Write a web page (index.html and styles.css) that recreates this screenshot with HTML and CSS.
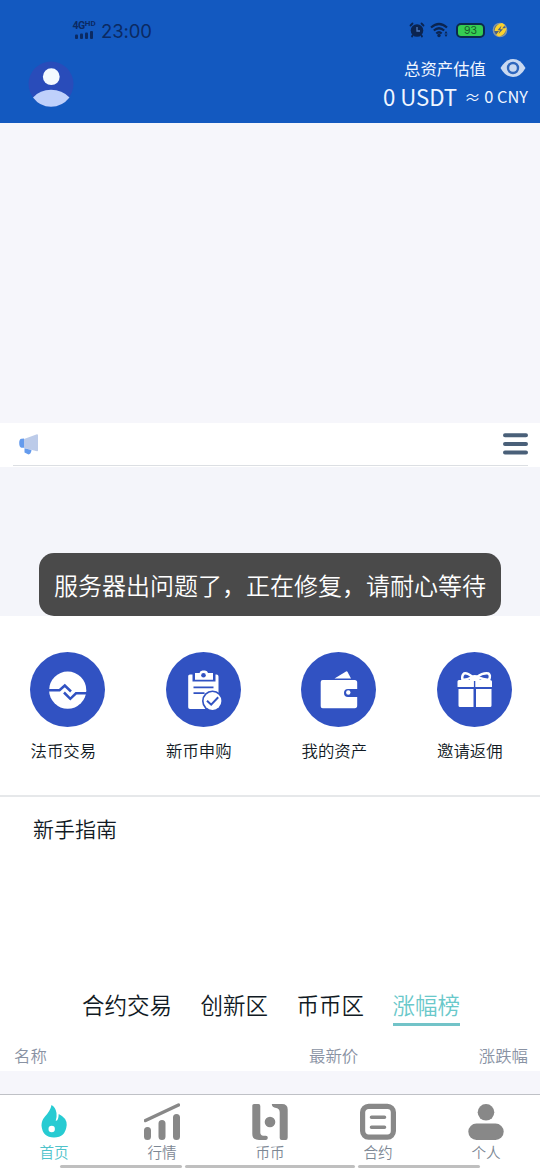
FILE: index.html
```html
<!DOCTYPE html>
<html lang="zh-CN">
<head>
<meta charset="utf-8">
<title>首页</title>
<link rel="stylesheet" href="styles.css">
</head>
<body>
<div class="app">
  <header class="header">
    <div class="status">
      <div class="signal">
        <span class="net">4G<sup>HD</sup></span>
        <svg width="18" height="8" viewBox="0 0 18 8" fill="#0b2a63"><rect x="0" y="3.5" width="3" height="4.5" rx="1"/><rect x="5" y="2.5" width="3" height="5.500" rx="1"/><rect x="10" y="1.500" width="3" height="6.500" rx="1"/><rect x="15" y="0" width="3" height="8" rx="1"/></svg>
      </div>
      <span class="clock">23:00</span>
      <div class="status-right">
        <svg width="16" height="16" viewBox="0 0 16 16"><circle cx="8" cy="8.500" r="6.300" fill="#0b2450"/><path d="M1.500 3.500 3.500 1.500M14.500 3.500 12.500 1.500M3.500 13.500 3 14.500M12.500 13.500 13 14.500" stroke="#0b2450" stroke-width="1.800" stroke-linecap="round"/><path d="M8 5v4h3" fill="none" stroke="#4d78bd" stroke-width="1.300"/></svg>
        <svg class="wifi" width="20" height="16" viewBox="0 0 20 16"><g fill="none" stroke="#0b2450" stroke-width="2.200"><path d="M1 5.500Q9 -1.500 17 5.500"/><path d="M3.800 8.500Q9 4 14.200 8.500"/><path d="M6.300 11.500Q9 9 11.700 11.500"/></g><circle cx="9" cy="13.500" r="1.700" fill="#0b2450"/><path d="M14.500 11.500 16 9l1.500 2.500zM14.500 12.500 16 15l1.500-2.500z" fill="#0b2450"/></svg>
        <span class="battery">93</span>
        <svg class="bolt" width="16" height="16" viewBox="0 0 16 16"><circle cx="8" cy="8" r="6.600" fill="#4d6180" stroke="#8796a1" stroke-width="1.500"/><path d="M2.500 9Q3 2.500 10 1l3 2-3 3.500 4.500-.5Q13.500 13 7 14.500l-3-1.500 3-4z" fill="#fbd22e"/><path d="M9.500 3.500 5.500 8.300H8L6.500 12 11 7.300H8.300Z" fill="#4d6180"/></svg>
      </div>
    </div>
    <div class="account">
      <svg class="avatar" width="46" height="46" viewBox="0 0 46 46"><circle cx="23" cy="23" r="22.500" fill="#294cba"/><circle cx="23.300" cy="15.700" r="8.400" fill="#f3faff"/><path d="M5 36.500Q12 28.800 23 28.800T41.500 36.500Q34 45.800 23 45.800T5 36.500Z" fill="#bfd0fb"/></svg>
      <div class="asset">
        <div class="asset-title">总资产估值
          <svg width="26" height="20" viewBox="0 0 26 20"><path d="M.5 10Q5.500 1 13 1t12.500 9Q20.500 19 13 19T.5 10Z" fill="#c9d9f1"/><circle cx="13" cy="10" r="6.200" fill="#2f67bd"/><circle cx="13" cy="10" r="3.800" fill="#c9d9f1"/></svg>
        </div>
        <div class="asset-value"><b>0 USDT</b><span>≈ 0 CNY</span></div>
      </div>
    </div>
  </header>
  <div class="banner"></div>
  <div class="notice">
    <div class="notice-inner">
      <svg width="20" height="21" viewBox="0 0 20 21"><path d="M5 5 18 .3q1 0 1 1V16.500q0 1-1 .8L5 14Z" fill="#bccbe9"/><path d="M5 4.500v9.200H2.500Q.2 13 .2 9T2.500 4.800Z" fill="#649bed"/><path d="M5.500 14.300 12.500 16Q12 20 9.500 20.500L5.500 18.500Z" fill="#649bed"/></svg>
      <svg width="25" height="22" viewBox="0 0 25 22"><path d="M2 2.300h21M2 11h21M2 19.500h21" stroke="#4a6079" stroke-width="4" stroke-linecap="round"/></svg>
    </div>
  </div>
  <div class="coins"><div class="toast">服务器出问题了，正在修复，请耐心等待</div></div>
  <nav class="menu">
    <a class="menu-item">
      <svg width="75" height="75" viewBox="0 0 75 75"><circle cx="37.500" cy="37.500" r="37.500" fill="#3152c2"/><circle cx="37.700" cy="38.200" r="18.600" fill="#fff"/><path d="M18 38.300H29.500L34.800 33.500 41 39.500M34 40.500 40.300 46.800 46 41.300H57" fill="none" stroke="#3152c2" stroke-width="2.500"/></svg>
      <span>法币交易</span>
    </a>
    <a class="menu-item">
      <svg width="75" height="75" viewBox="0 0 75 75"><circle cx="37.500" cy="37.500" r="37.500" fill="#3152c2"/><path d="M24 22.500h2.500v7h23v-7h1q2 0 2 2v31q0 1.500-1.500 1.500H24q-1.800 0-1.800-1.800V24q0-1.500 1.800-1.500Z" fill="#fff"/><path d="M29 21h4.500q.5-2.500 3-2.500h2.500q2.500 0 3 2.500H47v6.800H29z" fill="#fff"/><circle cx="37.500" cy="23.200" r="2.300" fill="#3152c2"/><path d="M27.500 35.400h20M27.500 41.200h11" stroke="#3152c2" stroke-width="1.800"/><circle cx="46.500" cy="49" r="10.500" fill="#3152c2"/><circle cx="46.500" cy="49" r="8.900" fill="#fff"/><path d="m41 48.700 4.200 4 7-7.500" fill="none" stroke="#3152c2" stroke-width="2"/></svg>
      <span>新币申购</span>
    </a>
    <a class="menu-item">
      <svg width="75" height="75" viewBox="0 0 75 75"><circle cx="37.500" cy="37.500" r="37.500" fill="#3152c2"/><path d="m33.500 26.500 11.500-7q1-.5 1.600.4L50 26.500Z" fill="#fff"/><path d="M21.700 28h32q2.500 0 2.500 2.500V37H47q-4 0-4 3.900T47 45h9.200v8.500q0 2.800-2.500 2.800h-32q-2 0-2-2V30q0-2 2-2Z" fill="#fff"/><circle cx="47.300" cy="40.500" r="2.200" fill="#fff"/></svg>
      <span>我的资产</span>
    </a>
    <a class="menu-item">
      <svg width="75" height="75" viewBox="0 0 75 75"><circle cx="37.500" cy="37.500" r="37.500" fill="#3152c2"/><path d="M35.500 25Q30 20.500 27 21.500q-2.500 2-1.500 6.500 5-.5 10-3ZM40 25Q46 20.500 51.500 21.500q2.500 2 .5 6.500-6-.5-12-3Z" fill="none" stroke="#fff" stroke-width="2.500" stroke-linejoin="round"/><path d="M34 24q3.700-2 7.500 0l1.500 4.500H32.500z" fill="#fff"/><path d="M22 28h31q2 0 2 1.500V35H20.500v-5.500Q20.500 28 22 28ZM21.500 37H36.500V55H23q-1.500 0-1.500-1.500ZM39 37H54.500V53.500q0 1.500-1.500 1.500H39Z" fill="#fff"/><path d="M37.600 29v6" stroke="#3152c2" stroke-width="1.400"/></svg>
      <span>邀请返佣</span>
    </a>
  </nav>
  <section class="guide">新手指南</section>
  <div class="tabs"><span>合约交易</span><span>创新区</span><span>币币区</span><span class="tab-active">涨幅榜</span></div>
  <div class="list-head"><span>名称</span><span>最新价</span><span>涨跌幅</span></div>
  <footer class="tabbar">
    <a class="nav-item nav-active">
      <svg width="36" height="37" viewBox="0 0 36 37"><path d="M15.500 2q4 2 5 8 .5 4-.8 7.800 2.800.2 3-6.800Q31 15 30.700 22 29.500 34.500 18 34.500T5.500 22.500Q5.500 17.500 9 13.500 14.500 7.500 15.500 2Z" fill="#27cbd2"/><circle cx="15.700" cy="26" r="3.200" fill="#fff"/></svg>
      <span>首页</span>
    </a>
    <a class="nav-item">
      <svg width="36" height="37" viewBox="0 0 36 37"><path d="M1.500 17.500 34.500 2" stroke="#888" stroke-width="3.500" stroke-linecap="round"/><path d="M3.500 27.500v6M18 20.500v13M32.500 14.500v19" stroke="#888" stroke-width="7" stroke-linecap="round"/></svg>
      <span>行情</span>
    </a>
    <a class="nav-item">
      <svg width="36" height="37" viewBox="0 0 36 37"><path d="M.3 2.500Q.3 1 2 1h4.500Q8.300 1 8.300 3v26.500q0 3 3 3.300h2.500q2.200 0 2 2.200-.3 2-2 2H7Q.3 37 .3 31ZM19.800 1H30Q35.700 1 35.700 6.500v28q0 2.500-2 2.500h-4q-2 0-2-2V9.500q0-4-3.500-4.500Q19.800 4.500 19.800 1Z" fill="#888"/><circle cx="18" cy="19" r="5.300" fill="#888"/></svg>
      <span>币币</span>
    </a>
    <a class="nav-item">
      <svg width="36" height="37" viewBox="0 0 36 37"><rect x="2.600" y="3.300" width="30.800" height="30.800" rx="6" fill="none" stroke="#888" stroke-width="5.200"/><path d="M11.500 14.200h13M11.500 24.200h13" stroke="#888" stroke-width="3.600" stroke-linecap="round"/></svg>
      <span>合约</span>
    </a>
    <a class="nav-item">
      <svg width="36" height="37" viewBox="0 0 36 37"><circle cx="18" cy="9.300" r="8.300" fill="#888"/><rect x=".3" y="20.500" width="35.400" height="16.500" rx="8.200" fill="#888"/></svg>
      <span>个人</span>
    </a>
    <div class="gesture"><i></i><i class="wide"></i><i></i></div>
  </footer>
</div>
</body>
</html>
```

FILE: styles.css
```css
* { box-sizing: border-box; }
body { margin: 0; font-family: "Noto Sans CJK SC", sans-serif; font-weight: 350; color: #111a24; background: #f6f6fb; }
svg { display: block; flex: none; }
.app { width: 540px; height: 1170px; display: flex; flex-direction: column; overflow: hidden; }
.app > * { flex: none; }
.header { height: 123px; background: #1359c0; color: #f0f6ff; font-weight: 400; }
.status { height: 60px; padding: 0 32px 0 72px; display: flex; align-items: center; }
.signal { width: 24px; display: flex; flex-direction: column; align-items: center; color: #0b2a63; }
.net { font: bold 10.5px/10px Roboto, sans-serif; white-space: nowrap; letter-spacing: -.4px; }
.net sup { font-size: 8px; line-height: 0; vertical-align: 3px; letter-spacing: 0; }
.clock { margin: 2px 0 0 5px; font: 400 18.5px/24px Inter, sans-serif; color: #0b2a63; letter-spacing: -.1px; }
.status-right { margin-left: auto; display: flex; align-items: center; }
.wifi { margin-left: 5px; }
.battery { width: 29px; height: 15px; margin-left: 6px; border: 2px solid #0b2a4c; border-radius: 5px; background: #35cd52; color: #155c2a; font: 10.5px/11px Inter, sans-serif; text-align: center; }
.bolt { margin-left: 7px; }
.account { display: flex; justify-content: space-between; padding: 0 12px 0 28px; }
.avatar { margin-top: 1px; }
.asset-title { height: 22px; margin-top: -3px; padding-right: 2px; display: flex; justify-content: flex-end; align-items: center; gap: 14px; font-size: 16.4px; line-height: 22px; }
.asset-value { display: flex; justify-content: flex-end; align-items: center; gap: 7px; margin-top: 1px; line-height: 32px; white-space: nowrap; }
.asset-value b { font-weight: inherit; font-size: 22.2px; }
.asset-value span { font-size: 16.4px; }
.banner { height: 300px; background: #f6f6fb; }
.notice { height: 44px; background: #fff; padding: 0 12px 0 13px; }
.notice-inner { height: 43px; padding: 0 0 0 6px; border-bottom: 1px solid #dcdfe3; display: flex; justify-content: space-between; align-items: center; }
.coins { height: 149px; background: #f4f5fa; display: flex; justify-content: center; align-items: flex-end; }
.toast { width: 462px; height: 63px; border-radius: 15px; background: #4a4a4a; color: #fff; font-size: 24px; line-height: 63px; text-align: center; white-space: nowrap; }
.menu { height: 180.500px; background: #fff; border-bottom: 2px solid #e6e8ea; display: flex; justify-content: space-between; padding: 36px 28.500px 0 30px; }
.menu-item { width: 75px; }
.menu-item span { display: block; margin-top: 11px; padding-left: .500px; font-size: 16.4px; line-height: 24px; white-space: nowrap; }
.guide { height: 178.500px; background: #fff; padding: 16px 33px; font-size: 21px; line-height: 30px; }
.tabs { height: 65px; background: #fff; display: flex; gap: 28.500px; padding: 11px 0 0 82px; font-size: 22.500px; line-height: 36px; }
.tabs span { height: 40px; white-space: nowrap; }
.tab-active { color: #69c8ca; border-bottom: 3px solid #72c3c8; }
.list-head { height: 31px; background: #fff; color: #8992a3; display: grid; grid-template-columns: 295px 1fr auto; padding: 3px 12px 0 14px; font-size: 16.400px; line-height: 24px; }
.tabbar { height: 76px; margin-top: 23px; position: relative; display: flex; background: #fff; border-top: 1px solid #bfc1c6; }
.nav-item { flex: 1; display: flex; flex-direction: column; align-items: center; padding-top: 8px; font-size: 14.600px; line-height: 22px; color: #7c8794; }
.nav-item span { margin-top: 1px; }
.nav-active { color: #4fc3cb; }
.gesture { position: absolute; left: 60px; right: 60px; bottom: 2px; display: flex; gap: 3px; }
.gesture i { flex: 122; height: 3px; border-radius: 2px; background: #bfbfbf; }
.gesture .wide { flex: 170; }
```
